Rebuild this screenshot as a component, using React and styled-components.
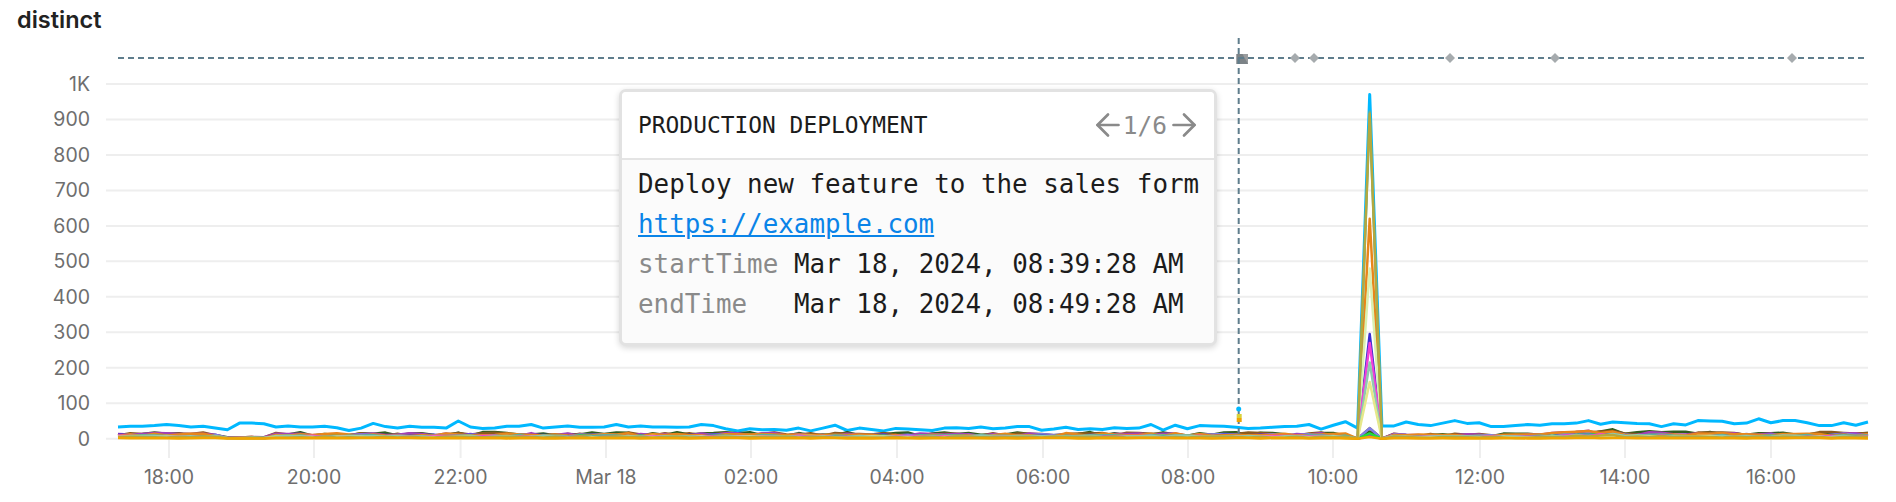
import React from "react";
import styled, { createGlobalStyle } from "styled-components";
import { ArrowLeft, ArrowRight } from "lucide-react";

const PLOT_LEFT = 106;
const PLOT_RIGHT = 1868;
const SERIES_LEFT = 118;
const STEP = 1750 / 144;
const ZERO_Y = 438.7;
const UNIT = 0.3547;
const SPIKE = 103;

const yTicks = [0, 100, 200, 300, 400, 500, 600, 700, 800, 900, 1000];
const xTicks = [
  ["18:00", 169],
  ["20:00", 314],
  ["22:00", 460.6],
  ["Mar 18", 606],
  ["02:00", 751],
  ["04:00", 897],
  ["06:00", 1043],
  ["08:00", 1188],
  ["10:00", 1333],
  ["12:00", 1480],
  ["14:00", 1625],
  ["16:00", 1771],
];
const diamonds = [1295, 1314, 1450, 1555, 1792];

const blueValues = [
  33, 35, 35, 37, 40, 37, 33, 35, 30, 25, 44, 44, 42, 33, 36, 33, 33, 35, 31, 23,
  30, 43, 34, 30, 35, 32, 32, 30, 50, 33, 29, 30, 35, 35, 40, 30, 33, 36, 32, 32,
  33, 40, 33, 36, 33, 33, 32, 33, 40, 37, 28, 22, 28, 25, 26, 24, 30, 22, 30, 38,
  23, 30, 26, 22, 29, 27, 25, 23, 30, 31, 29, 33, 28, 30, 34, 34, 24, 27, 32, 26,
  28, 26, 31, 29, 30, 40, 24, 38, 28, 37, 36, 35, 32, 29, 30, 32, 34, 35, 40, 27,
  38, 48, 30, 970, 36, 36, 47, 40, 37, 44, 51, 43, 45, 34, 34, 37, 40, 38, 42, 42,
  44, 51, 41, 47, 45, 43, 42, 34, 42, 39, 51, 50, 49, 42, 44, 56, 45, 51, 51, 45,
  37, 37, 45, 38, 47,
];

// rough height of the low band of series along the time axis
const bandHeight = (i) => {
  if (i >= 9 && i <= 12) return 5;
  if (i >= 118 && i <= 123) return 18 + (i - 118) * 2;
  if (i > 123 && i < 128) return 20;
  if (i > 105 && i < 118) return 14;
  if (i >= 128) return 18;
  return 17;
};

// drawn in this order so the orange one ends on top of the base
const lowSeries = [
  { color: "#2f5d1e", scale: 1, peak: 20 },
  { color: "#8a5a1c", scale: 0.95, peak: 30 },
  { color: "#a33fb5", scale: 0.85, peak: 10 },
  { color: "#7f7fe8", scale: 0.7, peak: 30 },
  { color: "#3a2fd0", scale: 0.6, peak: 295 },
  { color: "#1fdc3a", scale: 0.5, peak: 15 },
  { color: "#e8861a", scale: 0.85, peak: 620 },
  { color: "#d9f0b0", scale: 0.4, peak: 480 },
  { color: "#5fb09a", scale: 0.55, peak: 922 },
  { color: "#f03fd8", scale: 0.45, peak: 270 },
  { color: "#8fc9b0", scale: 0.45, peak: 215 },
  { color: "#e6e88a", scale: 0.3, peak: 160 },
  { color: "#b5a93f", scale: 0.35, peak: 916 },
  { color: "#f0a500", scale: 0.1, peak: 5 },
];

const makeRandom = (seed) => () => {
  seed = (seed + 0x6d2b79f5) | 0;
  let t = Math.imul(seed ^ (seed >>> 15), 1 | seed);
  t = (t + Math.imul(t ^ (t >>> 7), 61 | t)) ^ t;
  return ((t ^ (t >>> 14)) >>> 0) / 4294967296;
};

const toPoints = (values) =>
  values
    .map((v, i) => `${(SERIES_LEFT + i * STEP).toFixed(1)},${(ZERO_Y - v * UNIT).toFixed(1)}`)
    .join(" ");

const lowLines = lowSeries.map((s, n) => {
  const random = makeRandom(100 + n);
  const values = blueValues.map((_, i) => {
    if (i === SPIKE) return s.peak;
    if (i === SPIKE - 1 || i === SPIKE + 1) return 0;
    return Math.max(0.5, bandHeight(i) * s.scale * (0.45 + random() * 0.65));
  });
  return { color: s.color, points: toPoints(values) };
});

const GlobalStyle = createGlobalStyle`
  body {
    margin: 0;
    background: #fff;
    font-family: Inter, "Liberation Sans", sans-serif;
  }
`;

const Page = styled.div`
  width: 1896px;
  height: 502px;
  overflow: hidden;
`;

const Title = styled.div`
  height: 38px;
  line-height: 40px;
  padding-left: 17px;
  font-size: 23.5px;
  font-weight: 600;
  color: #222;
`;

const ChartArea = styled.div`
  position: relative;
  height: 464px;
`;

const Plot = styled.svg`
  display: block;
`;

const GridLine = styled.line`
  stroke: #eeeeee;
  stroke-width: 2;
`;

const AxisText = styled.text`
  font-family: Inter, "Liberation Sans", sans-serif;
  font-size: 19.5px;
  fill: #6e6e6e;
`;

const Crosshair = styled.line`
  stroke: #5f7d8c;
  stroke-width: 2;
  stroke-dasharray: 6 4;
`;

const SeriesLine = styled.polyline`
  fill: none;
  stroke: ${(p) => p.$color};
  stroke-width: ${(p) => p.$width};
  stroke-linejoin: round;
`;

const Marker = styled.path`
  fill: #a6abae;
`;

const Tooltip = styled.div`
  position: absolute;
  left: 619px;
  top: 51px;
  width: 598px;
  height: 257px;
  box-sizing: border-box;
  border: 3px solid #e2e2e2;
  border-radius: 7px;
  box-shadow: 0 2px 6px rgba(0, 0, 0, 0.16);
  background: #fbfbfb;
  font-family: "DejaVu Sans Mono", "Liberation Mono", monospace;
  color: #1c1c1c;
  overflow: hidden;
`;

const TooltipHeader = styled.div`
  display: flex;
  align-items: center;
  justify-content: space-between;
  height: 66px;
  padding: 0 19px 0 16px;
  background: #fff;
  border-bottom: 2px solid #e4e4e4;
  font-size: 22.9px;
`;

const Pager = styled.div`
  display: flex;
  align-items: center;
  gap: 8px;
  color: #8a8a8a;
  font-size: 24.5px;
`;

const PagerArrow = styled.span`
  display: flex;
  margin: -7px;
  margin-right: ${(p) => (p.$first ? "-11px" : "-7px")};
  margin-left: ${(p) => (p.$first ? "-7px" : "-9px")};
`;

const TooltipBody = styled.div`
  padding: 4px 0 0 16px;
  font-size: 25.9px;
  line-height: 40px;
  white-space: pre;
`;

const LinkRow = styled.a`
  display: block;
  color: #0a84e8;
  text-decoration: underline;
`;

const InfoRow = styled.div`
  display: grid;
  grid-template-columns: 156px auto;
`;

const InfoKey = styled.span`
  color: #8a8a8a;
`;

export default function App() {
  return (
    <Page>
      <GlobalStyle />
      <Title>distinct</Title>
      <ChartArea>
        <Plot width="1896" height="464" viewBox="0 38 1896 464">
          {yTicks.map((v) => (
            <g key={v}>
              <GridLine x1={PLOT_LEFT} x2={PLOT_RIGHT} y1={ZERO_Y - v * UNIT} y2={ZERO_Y - v * UNIT} />
              <AxisText x="90" y={ZERO_Y - v * UNIT + 7} textAnchor="end">
                {v === 1000 ? "1K" : v}
              </AxisText>
            </g>
          ))}
          {xTicks.map(([label, x]) => (
            <g key={label}>
              <GridLine x1={x} x2={x} y1="440" y2="458" />
              <AxisText x={x} y="484" textAnchor="middle">
                {label}
              </AxisText>
            </g>
          ))}
          <SeriesLine points={toPoints(blueValues)} $color="#00b8ff" $width={3} />
          {lowLines.map((s) => (
            <SeriesLine key={s.color} points={s.points} $color={s.color} $width={2.5} />
          ))}
          <rect x="1236.5" y="54" width="11.5" height="10" fill="#9a9c9e" />
          <path d="M1236.5 54h6l5.5 10h-11.5z" fill="#7c8387" />
          <Crosshair x1={SERIES_LEFT} x2={PLOT_RIGHT} y1="58" y2="58" />
          <Crosshair x1="1238.7" x2="1238.7" y1="38" y2="438" />
          <circle cx="1238.7" cy="409" r="2.5" fill="#00b8ff" />
          <rect x="1236.7" y="414" width="5" height="4" fill="#d9d23a" />
          <rect x="1236.7" y="418" width="5" height="4" fill="#f0a500" />
          {diamonds.map((x) => (
            <Marker key={x} d={`M${x} 53l5 5-5 5-5-5z`} />
          ))}
        </Plot>
        <Tooltip>
          <TooltipHeader>
            PRODUCTION DEPLOYMENT
            <Pager>
              <PagerArrow $first>
                <ArrowLeft size={36} strokeWidth={1.8} />
              </PagerArrow>
              1/6
              <PagerArrow>
                <ArrowRight size={36} strokeWidth={1.8} />
              </PagerArrow>
            </Pager>
          </TooltipHeader>
          <TooltipBody>
            <div>Deploy new feature to the sales form</div>
            <LinkRow href="#">https://example.com</LinkRow>
            <InfoRow>
              <InfoKey>startTime</InfoKey>
              <span>Mar 18, 2024, 08:39:28 AM</span>
            </InfoRow>
            <InfoRow>
              <InfoKey>endTime</InfoKey>
              <span>Mar 18, 2024, 08:49:28 AM</span>
            </InfoRow>
          </TooltipBody>
        </Tooltip>
      </ChartArea>
    </Page>
  );
}
